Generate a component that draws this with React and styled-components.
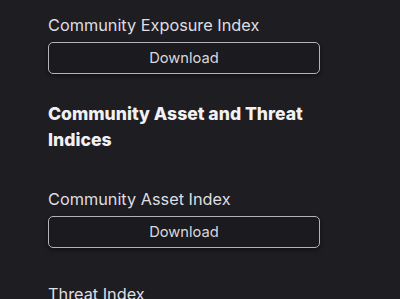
import React from 'react';
import styled, {createGlobalStyle} from 'styled-components';

const GlobalStyle = createGlobalStyle`
html, body {
    margin:0;
    padding:0;
    background-color:#1e1d22;
}
body {
    font-family: Inter, 'Noto Sans', 'Liberation Sans', sans-serif;
    -webkit-font-smoothing:antialiased;
}
`

const Page = styled.div`
display:flex;
flex-direction:column;
width:272px;
padding:14px 0 0 48px;
`

const Item = styled.div`
display:flex;
flex-direction:column;
margin-bottom:${props => props.spaced ? '35px' : '27px'};
`

const Label = styled.p`
margin:0 0 6px;
font-size:16.3px;
line-height:22px;
color:#dfdee3;
`

const DownloadButton = styled.button`
box-sizing:border-box;
width:100%;
height:32px;
padding:0;
border:1px solid #b4b3b8;
border-radius:5px;
background-color:#1b1a1f;
box-shadow:0 2px 4px rgba(0,0,0,.45);
font-family:inherit;
font-size:14.7px;
color:#d9d8dd;
cursor:pointer;
`

const Heading = styled.h3`
margin:0 0 35px;
font-size:17.6px;
line-height:26px;
font-weight:800;
color:#f1f1f3;
`

const Section = ({title, spaced, noButton}) => (
    <Item spaced={spaced}>
        <Label>{title}</Label>
        {!noButton && <DownloadButton>Download</DownloadButton>}
    </Item>
)

const App = () => {
    return (
        <>
            <GlobalStyle/>
            <Page>
                <Section title="Community Exposure Index"/>
                <Heading>Community Asset and Threat Indices</Heading>
                <Section title="Community Asset Index" spaced/>
                <Section title="Threat Index" noButton/>
            </Page>
        </>
    )
}

export default App;
